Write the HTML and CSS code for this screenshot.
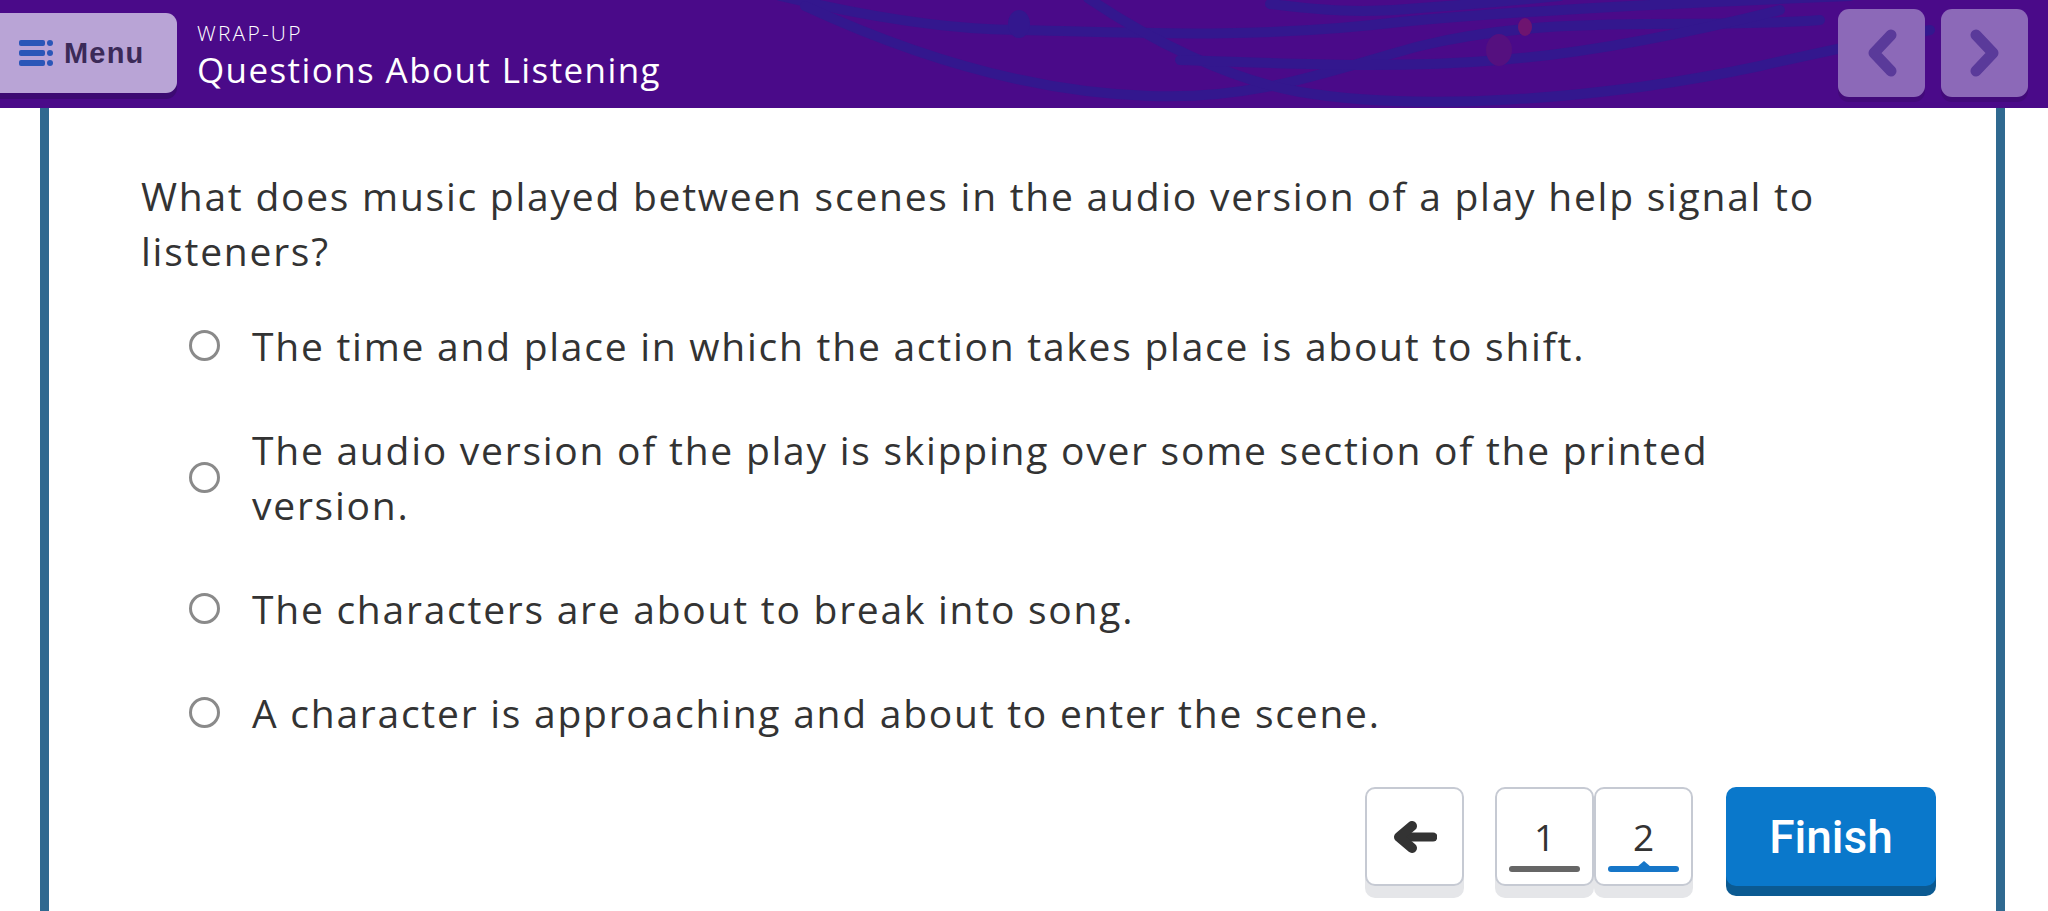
FILE: index.html
```html
<!DOCTYPE html>
<html lang="en">
<head>
<meta charset="utf-8">
<title>Questions About Listening</title>
<link rel="stylesheet" href="styles.css">
</head>
<body>
<header class="topbar">
  <svg class="topbar-art" viewBox="0 0 2048 108" preserveAspectRatio="none" aria-hidden="true">
    <g fill="none" stroke="#33178e" stroke-width="10" stroke-linecap="round">
      <path d="M780 -4 C 880 20, 960 30, 1020 30 C 1120 32, 1250 40, 1400 22 C 1520 10, 1700 2, 1850 -4"/>
      <path d="M805 6 C 900 50, 1020 92, 1150 96 C 1260 100, 1330 70, 1420 46 C 1560 12, 1700 30, 1820 20"/>
      <path d="M1088 -2 C 1150 40, 1230 80, 1300 92 C 1420 112, 1600 100, 1760 66 C 1830 50, 1880 40, 1930 30"/>
      <path d="M1270 4 C 1320 10, 1360 14, 1420 8 C 1480 4, 1520 0, 1560 -4"/>
      <path d="M1180 60 C 1260 62, 1380 70, 1500 60 C 1600 52, 1700 30, 1780 10"/>
    </g>
    <ellipse cx="1019" cy="24" rx="11" ry="14" fill="#33178e"/>
    <ellipse cx="1499" cy="50" rx="13" ry="16" fill="#55107f"/>
    <ellipse cx="1525" cy="27" rx="7" ry="9" fill="#6e1470"/>
    <ellipse cx="1914" cy="22" rx="10" ry="12" fill="#8a5aa0" opacity="0.6"/>
  </svg>
  <button class="menu-btn" type="button">
    <svg class="menu-icon" viewBox="0 0 34 26" aria-hidden="true">
      <rect x="0" y="0" width="26" height="6" rx="2" fill="#2b56b8"/>
      <rect x="0" y="10" width="26" height="6" rx="2" fill="#2b56b8"/>
      <rect x="0" y="20" width="26" height="6" rx="2" fill="#2b56b8"/>
      <circle cx="31" cy="3" r="3" fill="#2b56b8"/>
      <circle cx="31" cy="13" r="3" fill="#2b56b8"/>
      <circle cx="31" cy="23" r="3" fill="#2b56b8"/>
    </svg>
    <span class="menu-label">Menu</span>
  </button>
  <div class="titles">
    <div class="eyebrow">WRAP-UP</div>
    <h1 class="lesson-title">Questions About Listening</h1>
  </div>
  <nav class="top-nav">
    <button class="nav-btn" type="button" aria-label="Previous">
      <svg viewBox="0 0 40 50" aria-hidden="true"><path d="M29 7 L12 25 L29 43" fill="none" stroke="#5a3a9a" stroke-width="11" stroke-linecap="round" stroke-linejoin="round"/></svg>
    </button>
    <button class="nav-btn" type="button" aria-label="Next">
      <svg viewBox="0 0 40 50" aria-hidden="true"><path d="M11 7 L28 25 L11 43" fill="none" stroke="#5a3a9a" stroke-width="11" stroke-linecap="round" stroke-linejoin="round"/></svg>
    </button>
  </nav>
</header>

<main class="card">
  <section class="question">
    <p class="prompt">What does music played between scenes in the audio version of a play help signal to listeners?</p>
    <ul class="options">
      <li class="option"><span class="radio"></span><span class="opt-text">The time and place in which the action takes place is about to shift.</span></li>
      <li class="option"><span class="radio"></span><span class="opt-text">The audio version of the play is skipping over some section of the printed version.</span></li>
      <li class="option"><span class="radio"></span><span class="opt-text">The characters are about to break into song.</span></li>
      <li class="option"><span class="radio"></span><span class="opt-text">A character is approaching and about to enter the scene.</span></li>
    </ul>
  </section>
  <div class="footer-nav">
    <button class="tile back-tile" type="button" aria-label="Back">
      <svg viewBox="0 0 44 32" aria-hidden="true">
        <path d="M40 16 H8" stroke="#333" stroke-width="9" stroke-linecap="round" fill="none"/>
        <path d="M19 5 L6 16 L19 27" stroke="#333" stroke-width="10" stroke-linecap="round" stroke-linejoin="round" fill="none"/>
      </svg>
    </button>
    <div class="pages">
      <button class="tile page-tile" type="button"><span class="num">1</span><span class="bar"></span></button>
      <button class="tile page-tile current" type="button"><span class="num">2</span><span class="bar"></span></button>
    </div>
    <button class="finish-btn" type="button">Finish</button>
  </div>
</main>
</body>
</html>
```

FILE: styles.css
```css
* { box-sizing: border-box; }

html, body {
  margin: 0;
  padding: 0;
  background: #ffffff;
  height: 911px;
  overflow: hidden;
}

body {
  font-family: "Open Sans", "DejaVu Sans", sans-serif;
  color: #333333;
}

button { font: inherit; cursor: pointer; }

/* ---------- Top bar ---------- */
.topbar {
  position: relative;
  height: 108px;
  background: #4a0a89;
  display: flex;
  align-items: flex-start;
  overflow: hidden;
  z-index: 2;
}

.topbar-art {
  position: absolute;
  inset: 0;
  width: 100%;
  height: 100%;
}

.menu-btn {
  position: relative;
  margin-top: 13px;
  width: 177px;
  height: 80px;
  border: none;
  border-radius: 0 11px 11px 0;
  background: #b9a4d6;
  box-shadow: 0 6px 0 #3c0a72;
  display: flex;
  align-items: center;
  padding: 0 0 0 19px;
  gap: 11px;
}

.menu-icon { width: 34px; height: 26px; display: block; }

.menu-label {
  font-family: "Liberation Sans", Arial, sans-serif;
  font-weight: 700;
  font-size: 29px;
  letter-spacing: 1.2px;
  color: #3b2a58;
}

.titles {
  position: relative;
  margin-left: 20px;
  padding-top: 19px;
  color: #ffffff;
  display: flex;
  flex-direction: column;
}

.eyebrow {
  font-size: 21px;
  font-weight: 300;
  line-height: 28px;
  letter-spacing: 2.2px;
}

.lesson-title {
  margin: 0;
  font-size: 35px;
  font-weight: 400;
  line-height: 46px;
  letter-spacing: 1.4px;
}

.top-nav {
  position: relative;
  margin-left: auto;
  margin-right: 20px;
  margin-top: 9px;
  display: flex;
  gap: 16px;
}

.nav-btn {
  width: 87px;
  height: 88px;
  border: none;
  border-radius: 11px;
  background: #8c69b8;
  box-shadow: 0 5px 0 #420a7a;
  display: flex;
  align-items: center;
  justify-content: center;
  padding: 0;
}

.nav-btn svg { width: 40px; height: 50px; display: block; }

/* ---------- Card ---------- */
.card {
  margin: 0 43px 0 40px;
  height: 803px;
  border-left: 9px solid #2f6990;
  border-right: 9px solid #2f6990;
  background: #ffffff;
  padding: 60px 60px 0 92px;
  display: flex;
  flex-direction: column;
}

.question {
  padding-right: 104px;
}

.prompt {
  margin: 0;
  font-size: 39px;
  line-height: 55px;
  letter-spacing: 1.75px;
  color: #333333;
}

.options {
  list-style: none;
  margin: 40px 0 0 0;
  padding: 0;
  display: flex;
  flex-direction: column;
  gap: 49px;
}

.option {
  display: flex;
  align-items: center;
  padding-left: 48px;
  gap: 32px;
}

.radio {
  flex: none;
  width: 31px;
  height: 31px;
  border: 3px solid #8a8a8a;
  border-radius: 50%;
  background: #ffffff;
}

.opt-text {
  font-size: 39px;
  line-height: 55px;
  letter-spacing: 1.75px;
  color: #333333;
}

/* ---------- Footer navigation ---------- */
.footer-nav {
  margin-top: 47px;
  display: flex;
  justify-content: flex-end;
  align-items: flex-start;
}

.tile {
  width: 99px;
  height: 99px;
  border: 2px solid #c6cad3;
  border-radius: 10px;
  background: #ffffff;
  box-shadow: 0 12px 0 #e5e6e9;
  padding: 0;
  position: relative;
}

.back-tile {
  display: flex;
  align-items: center;
  justify-content: center;
}

.back-tile svg { width: 44px; height: 32px; display: block; }

.pages {
  margin-left: 31px;
  display: flex;
}

.page-tile {
  display: flex;
  flex-direction: column;
  align-items: center;
  padding-top: 30px;
}

.num {
  font-size: 37px;
  line-height: 36px;
  color: #333333;
}

.bar {
  position: absolute;
  left: 12px;
  right: 12px;
  bottom: 12px;
  height: 6px;
  border-radius: 3px;
  background: #666666;
}

.current .bar { background: #1676c8; }

.current .bar::after {
  content: "";
  position: absolute;
  left: 50%;
  top: -5px;
  margin-left: -7px;
  border-left: 7px solid transparent;
  border-right: 7px solid transparent;
  border-bottom: 6px solid #1676c8;
}

.finish-btn {
  margin-left: 33px;
  width: 210px;
  height: 99px;
  border: none;
  border-radius: 10px;
  background: #0a78cb;
  box-shadow: 0 10px 0 #0b5a92;
  color: #ffffff;
  font-family: Roboto, "Liberation Sans", sans-serif;
  font-size: 46px;
  font-weight: 500;
  padding: 0;
}
```
